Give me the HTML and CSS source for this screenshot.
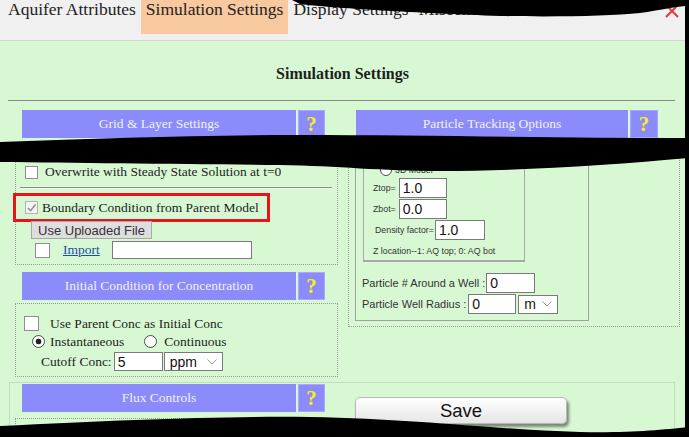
FILE: index.html
```html
<!DOCTYPE html>
<html lang="en">
<head>
<meta charset="utf-8">
<title>Simulation Settings</title>
<link rel="stylesheet" href="styles.css">
</head>
<body>
<div class="page">
  <nav class="tabs">
    <span class="tab">Aquifer Attributes</span>
    <span class="tab active">Simulation Settings</span>
    <span class="tab">Display Settings</span>
    <span class="tab">Miscellaneous</span>
    <svg class="close" viewBox="0 0 16 16" aria-label="close"><path d="M2 2 L14 14 M14 2 L2 14" stroke="#e23b3b" stroke-width="2" fill="none"/></svg>
  </nav>

  <main class="content">
    <h1 class="title">Simulation Settings</h1>
    <hr class="rule">

    <div class="cols">
      <section class="col col-left">
        <div class="hdr-row">
          <div class="hdr">Grid &amp; Layer Settings</div>
          <div class="help">?</div>
        </div>
        <div class="panel p-grid">
          <div class="row r-over">
            <span class="cb"></span>
            <span class="lbl">Overwrite with Steady State Solution at t=0</span>
          </div>
          <div class="inner-rule"></div>
          <div class="flag">
            <span class="cb cb-dis"><svg viewBox="0 0 12 12"><path d="M2 6.5 L5 9.5 L10.5 2.5" stroke="#8d8d8d" stroke-width="1.5" fill="none"/></svg></span>
            <span class="lbl">Boundary Condition from Parent Model</span>
          </div>
          <button class="btn-upload" type="button">Use Uploaded File</button>
          <div class="row r-import">
            <span class="cb cb-big"></span>
            <a class="link" href="#">Import</a>
            <input class="inp txt-import" type="text" value="">
          </div>
        </div>

        <div class="hdr-row hdr-gap">
          <div class="hdr">Initial Condition for Concentration</div>
          <div class="help">?</div>
        </div>
        <div class="panel p-init">
          <div class="row r-parent">
            <span class="cb cb-big"></span>
            <span class="lbl">Use Parent Conc as Initial Conc</span>
          </div>
          <div class="row r-radio">
            <span class="rb on"></span>
            <span class="lbl">Instantaneous</span>
            <span class="rb rb2"></span>
            <span class="lbl">Continuous</span>
          </div>
          <div class="row r-cut">
            <span class="lbl">Cutoff Conc:</span>
            <input class="inp inp-cut" type="text" value="5">
            <span class="sel sel-ppm">ppm<svg viewBox="0 0 10 6"><path d="M0.5 0.5 L5 5 L9.5 0.5" stroke="#9a9a9a" fill="none"/></svg></span>
          </div>
        </div>
      </section>

      <section class="col col-right">
        <div class="hdr-row">
          <div class="hdr">Particle Tracking Options</div>
          <div class="help">?</div>
        </div>
        <div class="panel p-track">
          <div class="tbox">
            <div class="ttable">
              <div class="tmain">
                <div class="row small r-mode"><span class="rb rb-s"></span><span class="lbl">3D Model</span></div>
                <div class="row small r-z r-ztop"><span class="lbl">Ztop=</span><input class="inp inp-z" type="text" value="1.0"></div>
                <div class="row small r-z"><span class="lbl">Zbot=</span><input class="inp inp-z" type="text" value="0.0"></div>
                <div class="row small r-z"><span class="lbl lbl-dens">Density factor=</span><input class="inp inp-dens" type="text" value="1.0"></div>
                <div class="small note">Z location--1: AQ top; 0: AQ bot</div>
              </div>
              <div class="tside"></div>
            </div>
            <div class="row wrow wrow1">
              <span class="lbl">Particle # Around a Well :</span>
              <input class="inp inp-well" type="text" value="0">
            </div>
            <div class="row wrow wrow2">
              <span class="lbl">Particle Well Radius :</span>
              <input class="inp inp-rad" type="text" value="0">
              <span class="sel sel-m">m<svg viewBox="0 0 10 6"><path d="M0.5 0.5 L5 5 L9.5 0.5" stroke="#9a9a9a" fill="none"/></svg></span>
            </div>
          </div>
        </div>
      </section>
    </div>

    <div class="flux">
      <div class="flux-left">
        <div class="hdr-row">
          <div class="hdr">Flux Controls</div>
          <div class="help">?</div>
        </div>
        <div class="panel p-flux"></div>
      </div>
      <div class="flux-right">
        <button class="save" type="button">Save</button>
      </div>
    </div>
  </main>

  <svg class="tears" viewBox="0 0 689 437" aria-hidden="true">
    <path d="M292 0 L300 4 C330 8 420 13 500 16 C560 17 610 16 640 13 C660 10 675 7 685 6 L685 437 L689 437 L689 0 Z" fill="#000"/>
    <path d="M0 142 C100 138 200 135 300 135 C420 135 560 138 689 138 L689 158 C610 165 520 171 440 171 C380 171 340 166 280 165 C180 164 80 163 0 162 Z" fill="#000"/>
    <path d="M0 426 C120 420 220 416 310 417 C420 419 500 430 580 432 C630 433 660 430 689 427 L689 437 L0 437 Z" fill="#000"/>
  </svg>
</div>
</body>
</html>
```

FILE: styles.css
```css
* { box-sizing: border-box; }
html, body { margin: 0; padding: 0; }
body {
  width: 689px;
  height: 437px;
  overflow: hidden;
  background: #d8f8d4;
  font-family: "Liberation Serif", "Times New Roman", serif;
  font-size: 13.5px;
  color: #1e1e1e;
}
.page { position: relative; width: 689px; height: 437px; overflow: hidden; }

/* tabs */
.tabs {
  display: flex;
  align-items: flex-start;
  height: 41px;
  padding-left: 3px;
  background: #f0f0f0;
  border-bottom: 1px solid #d4d4d4;
  font-size: 17.5px;
  line-height: 19.4px;
}
.tab { padding: 0 5px; height: 34px; color: #222; white-space: nowrap; }
.tab.active { background: #f8c89e; }
.close { margin-left: auto; margin-right: 9px; margin-top: 3px; width: 16px; height: 16px; flex: none; }

/* main */
.content { width: 685px; }
.title {
  margin: 23px 0 0;
  font-size: 16px;
  line-height: 20px;
  font-weight: bold;
  text-align: center;
}
.rule { margin: 16px 10px 0 8px; border: 0; border-top: 1px solid #8a8a8a; height: 0; }

.cols { display: flex; align-items: flex-start; margin-top: 9px; }
.col-left { margin-left: 15px; width: 323px; flex: none; }
.col-right { margin-left: 10px; width: 332px; flex: none; }

.hdr-row { display: flex; gap: 2px; height: 28px; }
.col-left .hdr-row, .flux-left .hdr-row { margin: 0 13px 0 7px; }
.col-right .hdr-row { margin: 0 22px 0 8px; }
.hdr {
  flex: 1;
  background: #8b8bfb;
  color: #f1f1f1;
  display: flex;
  align-items: center;
  justify-content: center;
}
.help {
  width: 27px;
  flex: none;
  background: #8b8bfb;
  border: 1px solid #a8a8ff;
  color: #f4ea4c;
  font-weight: bold;
  font-size: 21px;
  display: flex;
  align-items: center;
  justify-content: center;
  text-shadow: 0 0 1px #b49a18;
}
.col-right .help { width: 28px; }
.hdr-gap { margin-top: 7px !important; }

.panel { border: 1px dotted #9a9a9a; margin-top: 5px; }
.p-init { margin-top: 3px; }

.row { display: flex; align-items: center; }
.lbl { white-space: nowrap; }
.cb { width: 13px; height: 13px; border: 1px solid #8e8e8e; background: #fff; flex: none; display: block; }
.cb svg { display: block; width: 11px; height: 11px; }
.cb-dis { border-color: #b3b3b3; background: #f4f4f4; }
.cb-big { width: 15px; height: 15px; }
.rb {
  width: 13px; height: 13px; border-radius: 50%;
  border: 1px solid #4e4e4e; background: #fff; flex: none;
}
.rb.on { background: radial-gradient(circle, #222 0 2.6px, #fff 3.2px); }

.inp {
  border: 1px solid #7a7a7a;
  background: #fff;
  font: 14px "Liberation Sans", Arial, sans-serif;
  color: #111;
  padding: 0 0 0 3px;
  margin: 0;
  height: 20px;
  flex: none;
}
.sel {
  display: flex;
  align-items: center;
  justify-content: space-between;
  height: 19px;
  border: 1px solid #7a7a7a;
  background: #fff;
  font: 14px "Liberation Sans", Arial, sans-serif;
  color: #111;
  padding: 0 5px 0 5px;
  flex: none;
}
.sel svg { width: 10px; height: 6px; }

/* grid panel */
.p-grid { padding: 20px 0 4px 0; }
.r-over { height: 16px; }
.r-over .cb { margin-left: 9px; }
.r-over .lbl { margin-left: 7px; }
.inner-rule { margin: 7px 5px 0 4px; height: 2px; border-top: 1px solid #8c8c8c; border-bottom: 1px solid #f2fff2; }
.flag {
  margin: 4px 0 0 -3px;
  width: 257px;
  height: 29px;
  border: 3px solid #e8141c;
  display: flex;
  align-items: center;
}
.flag .cb { margin-left: 9px; }
.flag .lbl { margin-left: 4px; }
.btn-upload {
  display: block;
  margin: -1px 0 0 15px;
  width: 121px;
  height: 18px;
  padding: 0;
  font: 13px "Liberation Sans", Arial, sans-serif;
  color: #333;
  background: #dedede;
  border: 1px solid #a8a8a8;
}
.r-import { height: 20px; margin-top: 1px; }
.r-import .cb { margin-left: 19px; }
.link { margin-left: 13px; color: #1b4ea3; text-decoration: underline; }
.txt-import { margin-left: 12px; width: 140px; height: 18px; }

/* init panel */
.p-init { padding: 11px 0 5px 0; }
.r-parent { height: 17px; }
.r-parent .cb { margin-left: 8px; }
.r-parent .lbl { margin-left: 11px; }
.r-radio { height: 17px; margin-top: 1px; }
.r-radio .rb { margin-left: 16px; }
.r-radio .rb2 { margin-left: 20px; }
.r-radio .lbl { margin-left: 5px; }
.r-radio .rb2 + .lbl { margin-left: 7px; }
.r-cut { height: 19px; margin-top: 2px; }
.r-cut .lbl { margin-left: 25px; }
.inp-cut { margin-left: 2px; width: 49px; height: 19px; }
.sel-ppm { width: 59px; margin-left: 1px; }

/* tracking panel */
.p-track { padding: 2px 0 5px 6px; }
.tbox { width: 234px; border: 1px solid #a3a3a3; padding: 0 0 6px 0; }
.ttable { display: flex; margin-left: 7px; }
.tmain {
  width: 162px;
  flex: none;
  border-left: 1px solid #a8a8a8;
  border-right: 1px solid #a8a8a8;
  border-bottom: 2px solid #a8a8a8;
  padding: 0 0 4px 9px;
}
.tside { flex: 1; }
.small { font: 8.8px "Liberation Sans", Arial, sans-serif; color: #333; }
.r-mode { height: 13px; margin-top: 16px; }
.rb-s { width: 12px; height: 12px; margin-left: 7px; margin-right: 3px; }
.r-z { height: 20px; margin-top: 1px; }
.r-ztop { margin-top: 2px; }
.inp-z { width: 48px; margin-left: 3px; }
.lbl-dens { margin-left: 2px; }
.inp-dens { width: 50px; margin-left: 1px; }
.note { margin-top: 6px; line-height: 10px; white-space: nowrap; }
.wrow { margin-left: 6px; font: 11px "Liberation Sans", Arial, sans-serif; color: #333; height: 20px; }
.wrow1 { margin-top: 11px; }
.wrow2 { margin-top: 1px; }
.inp-well { width: 49px; margin-left: 1px; }
.inp-rad { width: 48px; margin-left: 2px; height: 20px; }
.sel-m { width: 40px; margin-left: 2px; }

/* flux row */
.flux {
  display: flex;
  margin: 5px 10px 0 9px;
  height: 60px;
  border: 1px solid #c3dcc3;
  border-bottom: 0;
}
.flux-left { margin-left: 5px; width: 323px; flex: none; padding-top: 1px; }
.p-flux { margin-top: 6px; height: 30px; }
.flux-right { margin-left: 17px; }
.save {
  margin-top: 14px;
  width: 212px;
  height: 27px;
  font: 18.5px "Liberation Sans", Arial, sans-serif;
  color: #111;
  background: linear-gradient(#ffffff, #e6e6e6);
  border: 1px solid #b8b8b8;
  border-radius: 5px;
  box-shadow: 2px 3px 3px rgba(0, 0, 0, 0.45);
  padding: 0;
}

/* torn screenshot edges */
.tears { position: absolute; left: 0; top: 0; width: 689px; height: 437px; pointer-events: none; }
```
